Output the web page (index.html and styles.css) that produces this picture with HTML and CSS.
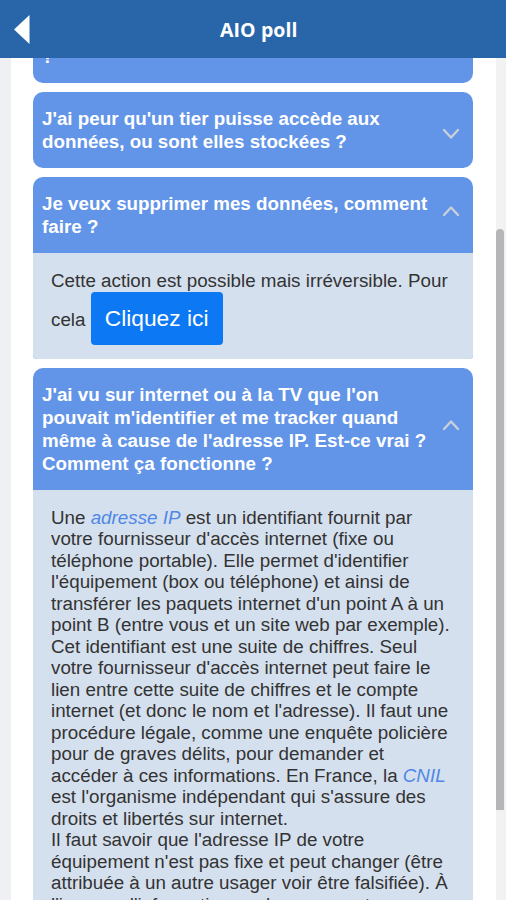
FILE: index.html
```html
<!DOCTYPE html>
<html lang="fr">
<head>
<meta charset="utf-8">
<title>AIO poll</title>
<link rel="stylesheet" href="styles.css">
</head>
<body>
<div class="app">
  <header class="topbar">
    <svg class="back" width="16" height="29" viewBox="0 0 16 29"><polygon points="0,14.5 15.5,0 15.5,29" fill="#ffffff"/></svg>
    <h1 class="title">AIO poll</h1>
  </header>
  <div class="main">
    <div class="gutter"></div>
    <div class="panel">
      <div class="list">
        <div class="card">
          <div class="card-head">
            <div class="q">Qui peut voir mes réponses au sondage<br>?</div>
            <div class="chev"><svg width="16" height="20" viewBox="0 0 16 20"><polyline points="1,10 8,17.5 15,10" /></svg></div>
          </div>
        </div>
        <div class="card">
          <div class="card-head">
            <div class="q">J'ai peur qu'un tier puisse accède aux données, ou sont elles stockées ?</div>
            <div class="chev"><svg width="16" height="20" viewBox="0 0 16 20"><polyline points="1,10 8,17.5 15,10" /></svg></div>
          </div>
        </div>
        <div class="card open">
          <div class="card-head">
            <div class="q">Je veux supprimer mes données, comment faire ?</div>
            <div class="chev"><svg width="16" height="20" viewBox="0 0 16 20"><polyline points="1,10 8,2.5 15,10" /></svg></div>
          </div>
          <div class="card-body">Cette action est possible mais irréversible. Pour cela <a class="btn">Cliquez ici</a></div>
        </div>
        <div class="card open">
          <div class="card-head">
            <div class="q">J'ai vu sur internet ou à la TV que l'on pouvait m'identifier et me tracker quand même à cause de l'adresse IP. Est-ce vrai ? Comment ça fonctionne ?</div>
            <div class="chev"><svg width="16" height="20" viewBox="0 0 16 20"><polyline points="1,10 8,2.5 15,10" /></svg></div>
          </div>
          <div class="card-body">Une <a class="lnk">adresse IP</a> est un identifiant fournit par votre fournisseur d'accès internet (fixe ou téléphone portable). Elle permet d'identifier l'équipement (box ou téléphone) et ainsi de transférer les paquets internet d'un point A à un point B (entre vous et un site web par exemple). Cet identifiant est une suite de chiffres. Seul votre fournisseur d'accès internet peut faire le lien entre cette suite de chiffres et le compte internet (et donc le nom et l'adresse). Il faut une procédure légale, comme une enquête policière pour de graves délits, pour demander et accéder à ces informations. En France, la <a class="lnk">CNIL</a> est l'organisme indépendant qui s'assure des droits et libertés sur internet.<br>Il faut savoir que l'adresse IP de votre équipement n'est pas fixe et peut changer (être attribuée à un autre usager voir être falsifiée). À l'inverse, l'information seule ne permet pas forcément de retrouver une personne.</div>
        </div>
      </div>
    </div>
    <div class="track"><div class="thumb"></div></div>
  </div>
</div>
</body>
</html>
```
FILE: styles.css
```css
html, body {
  margin: 0;
  padding: 0;
}
body {
  width: 506px;
  height: 900px;
  overflow: hidden;
  font-family: "Liberation Sans", Arial, sans-serif;
  background: #ffffff;
}
.app {
  display: flex;
  flex-direction: column;
  height: 900px;
}
.topbar {
  height: 58px;
  flex: none;
  background: #2866a9;
  display: flex;
  align-items: center;
  padding-left: 14px;
  box-sizing: border-box;
}
.back {
  display: block;
  flex: none;
}
.title {
  margin: 2px 0 0 190px;
  font-family: "Open Sans", "Liberation Sans", sans-serif;
  font-weight: 700;
  font-size: 19.5px;
  line-height: 26px;
  color: #ffffff;
  letter-spacing: 0.1px;
}
.main {
  flex: 1;
  display: flex;
  overflow: hidden;
  min-height: 0;
}
.gutter {
  width: 11px;
  flex: none;
  background: #eff0f3;
}
.panel {
  flex: 1;
  background: #ffffff;
  padding: 0 23px 0 22px;
  overflow: hidden;
}
.list {
  margin-top: -51px;
  display: flex;
  flex-direction: column;
  gap: 9px;
}
.track {
  width: 10px;
  flex: none;
  background: #f2f2f3;
}
.thumb {
  margin-top: 171px;
  width: 8px;
  height: 581px;
  background: #b6b6b8;
  border-radius: 4px 4px 0 0;
}
.card {
  background: #6294e8;
  border-radius: 10px;
  overflow: hidden;
}
.card.open {
  border-radius: 10px 10px 4px 4px;
}
.card-head {
  display: flex;
  align-items: center;
  padding: 15px 2px 15px 9px;
}
.q {
  flex: 1;
  font-weight: 700;
  font-size: 18.8px;
  line-height: 23px;
  color: #ffffff;
}
.chev {
  width: 40px;
  flex: none;
  display: flex;
  justify-content: center;
  align-items: center;
}
.chev svg {
  display: block;
}
.chev polyline {
  fill: none;
  stroke: #c9cfd9;
  stroke-width: 2.4;
  stroke-linecap: round;
  stroke-linejoin: round;
}
.card-body {
  background: #d5e0ee;
  padding: 17px 18px 14px 18px;
  font-size: 18.8px;
  line-height: 21.5px;
  color: #333333;
}
.btn {
  display: inline-block;
  background: #0c78f4;
  color: #ffffff;
  font-size: 22.8px;
  line-height: 34px;
  padding: 9px 14px 10px;
  border-radius: 4px;
}
.lnk {
  color: #4f87e8;
  font-style: italic;
}
```
